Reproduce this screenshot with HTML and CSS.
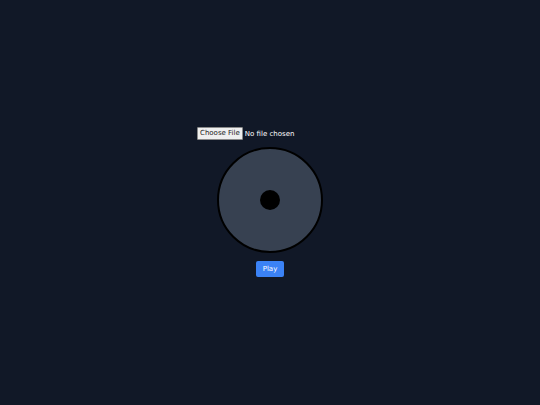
FILE: index.html
```html
<!DOCTYPE html>
<html>
<head>
<meta charset="utf-8">
<link rel="stylesheet" href="styles.css">
</head>
<body>
<main class="player">
  <input class="file" type="file" accept="audio/*">
  <div class="disc"><div class="hole"></div></div>
  <button class="play">Play</button>
</main>
</body>
</html>
```

FILE: styles.css
```css
html, body {
  margin: 0;
  height: 100%;
}
body {
  background: #111827;
  font-family: "DejaVu Sans", sans-serif;
}
.player {
  height: 100%;
  display: flex;
  flex-direction: column;
  align-items: center;
  justify-content: center;
  gap: 7px;
}
.file {
  font-family: "DejaVu Sans", sans-serif;
  font-size: 7px;
  line-height: 12px;
  color: #ffffff;
  width: 146px;
  margin-top: -2px;
}
.file::file-selector-button {
  font-family: "DejaVu Sans", sans-serif;
  font-size: 7px;
  height: 13px;
  padding: 0 2px;
  margin: 0 2px 0 0;
  border: 1px solid #8a8a8a;
  border-radius: 1px;
  background: #efefef;
  color: #222;
}
.disc {
  width: 102px;
  height: 102px;
  border: 2px solid #000;
  border-radius: 50%;
  background: #374151;
  display: flex;
  align-items: center;
  justify-content: center;
}
.hole {
  width: 20px;
  height: 20px;
  border-radius: 50%;
  background: #000;
}
.play {
  width: 28px;
  height: 16px;
  margin-top: 1px;
  border: none;
  border-radius: 2px;
  background: #3b82f6;
  color: #fff;
  font-family: "DejaVu Sans", sans-serif;
  font-size: 7px;
  padding: 0;
}
```
